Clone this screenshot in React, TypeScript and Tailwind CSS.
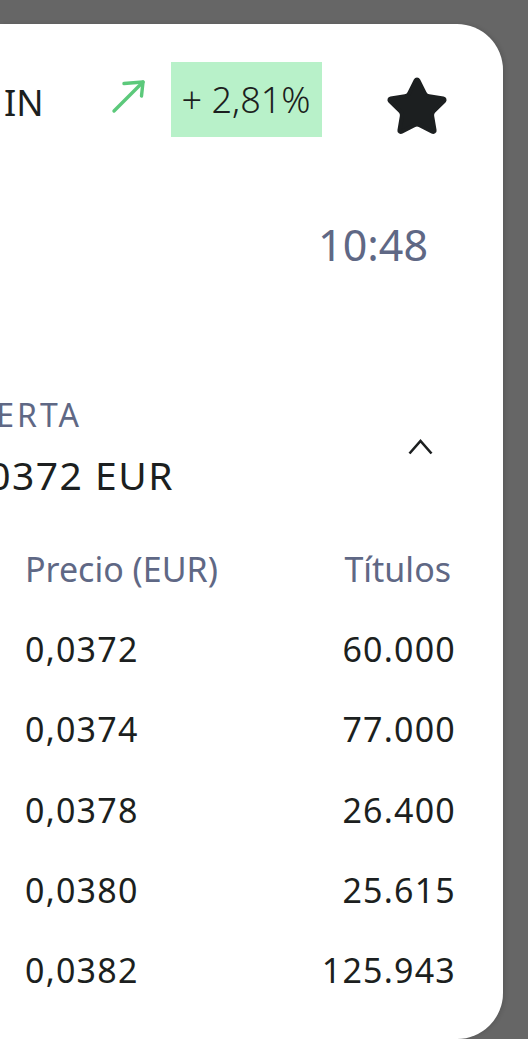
import { Star } from 'lucide-react'

const asks = [
  { price: '0,0372', qty: '60.000' },
  { price: '0,0374', qty: '77.000' },
  { price: '0,0378', qty: '26.400' },
  { price: '0,0380', qty: '25.615' },
  { price: '0,0382', qty: '125.943' },
]

function ArrowUpRight() {
  return (
    <svg width="36" height="36" viewBox="0 0 36 36" fill="none" className="mt-[16px] ml-[66px] shrink-0">
      <path d="M4 33 L33 4" stroke="#5cc97b" strokeWidth="3.4" strokeLinecap="round" />
      <path d="M14 5.5 L33 4 L31.5 18" stroke="#5cc97b" strokeWidth="3.4" strokeLinecap="round" strokeLinejoin="round" />
    </svg>
  )
}

export default function App() {
  return (
    <div className="h-[1039px] w-full overflow-hidden bg-[#666666] pt-[24px] font-['Noto_Sans',sans-serif]">
      <div className="h-[1015px] w-[503px] overflow-hidden rounded-r-[46px] bg-white shadow-[2px_0_4px_rgba(0,0,0,0.12)]">
        {/* header */}
        <div className="mt-[38px] flex h-[75px] items-start">
          <span className="mt-[23px] pl-[4px] text-[36px] leading-none text-[#1c1f20]">IN</span>
          <ArrowUpRight />
          <div className="ml-[25px] flex h-[75px] w-[151px] shrink-0 items-center justify-center bg-[#b8f1c9] text-[36px] font-light leading-none text-[#1c1f20]">
            + 2,81%
          </div>
          <Star
            size={66}
            strokeWidth={1.5}
            fill="#1c1f20"
            className="ml-[62px] mt-[12px] shrink-0 text-[#1c1f20]"
          />
        </div>

        {/* time */}
        <div className="mt-[86px] flex justify-end pr-[75px] text-[43px] leading-none text-[#5f6885]">10:48</div>

        {/* best ask */}
        <div className="mt-[133px] flex items-center">
          <div className="flex flex-col">
            <div className="flex w-[82px] justify-end">
              <span className="whitespace-nowrap text-[32px] leading-none tracking-[3px] text-[#5f6885]">OFERTA</span>
            </div>
            <div className="mt-[24px] flex w-[174px] justify-end">
              <span className="whitespace-nowrap text-[39px] leading-none tracking-[1.5px] text-[#1c1f20]">0,0372 EUR</span>
            </div>
          </div>
          <svg width="27" height="19" viewBox="0 0 27 19" fill="none" className="ml-[233px] shrink-0">
            <path d="M2.5 16.5 L13.5 4 L24.5 16.5" stroke="#1c1f20" strokeWidth="2.6" />
          </svg>
        </div>

        {/* order book */}
        <div className="mt-[58px] flex justify-between pl-[25px] pr-[52px] text-[34px] leading-none text-[#5f6885]">
          <span>Precio (EUR)</span>
          <span>Títulos</span>
        </div>
        <div className="mt-[46px] flex flex-col gap-[46.25px] pl-[25px] pr-[47px] text-[34px] leading-none text-[#1c1f20]">
          {asks.map((r) => (
            <div key={r.price} className="flex justify-between tracking-[1.2px]">
              <span>{r.price}</span>
              <span>{r.qty}</span>
            </div>
          ))}
        </div>
      </div>
    </div>
  )
}
